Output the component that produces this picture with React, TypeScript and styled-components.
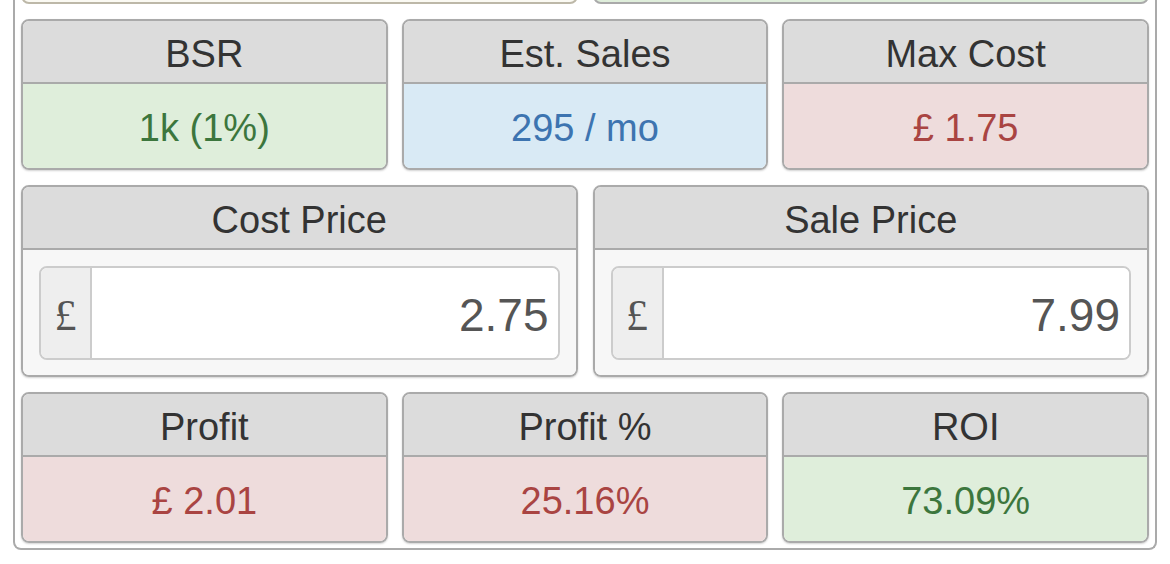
import styled, { createGlobalStyle } from "styled-components";

const GlobalStyle = createGlobalStyle`
  body {
    margin: 0;
    background: #ffffff;
    font-family: "Liberation Sans", Arial, sans-serif;
  }
`;

type Tone = "green" | "blue" | "red" | "plain";

const tones = {
  green: { bg: "#dfeedb", fg: "#3c763d" },
  blue: { bg: "#d9eaf5", fg: "#3d74b0" },
  red: { bg: "#eedcdc", fg: "#a94442" },
  plain: { bg: "#f7f7f7", fg: "#333333" },
};

// the page is scrolled, so everything is pinned to the bottom of the window
const Screen = styled.div`
  height: 564px;
  overflow: hidden;
  display: flex;
  flex-direction: column;
  justify-content: flex-end;
  padding-bottom: 14px;
  box-sizing: border-box;
`;

const Panel = styled.div`
  margin: 0 13px;
  border: 2px solid #aaaaaa;
  border-top: none;
  border-radius: 0 0 8px 8px;
  padding: 0 6px 5px;
  display: flex;
  flex-direction: column;
  gap: 15px;
`;

const Row = styled.div<{ $cols: number }>`
  display: grid;
  grid-template-columns: repeat(${(p) => p.$cols}, 1fr);
  column-gap: ${(p) => (p.$cols === 3 ? 14 : 15)}px;
`;

const Card = styled.div`
  border: 2px solid #aaaaaa;
  border-radius: 8px;
  overflow: hidden;
  box-shadow: 0 1px 2px rgba(0, 0, 0, 0.18);
  display: flex;
  flex-direction: column;
`;

const PrevCard = styled.div<{ $bg: string; $line: string }>`
  height: 80px;
  background: ${(p) => p.$bg};
  border: 2px solid ${(p) => p.$line};
  border-radius: 8px;
`;

const Header = styled.div`
  height: 61px;
  line-height: 66px;
  background: #dcdcdc;
  color: #333333;
  font-size: 38px;
  text-align: center;
  border-bottom: 2px solid #aaaaaa;
`;

const Value = styled.div<{ $tone: Tone }>`
  height: 84px;
  line-height: 89px;
  background: ${(p) => tones[p.$tone].bg};
  color: ${(p) => tones[p.$tone].fg};
  font-size: 38px;
  text-align: center;
`;

const Body = styled.div`
  background: #f7f7f7;
  padding: 16px 16px 15px;
`;

const InputGroup = styled.div`
  height: 90px;
  display: flex;
  border: 2px solid #cccccc;
  border-radius: 8px;
  overflow: hidden;
  background: #ffffff;
`;

const Addon = styled.span`
  width: 49px;
  flex: none;
  display: flex;
  align-items: center;
  justify-content: center;
  padding-top: 4px;
  background: #eeeeee;
  border-right: 2px solid #cccccc;
  color: #555555;
  font-family: "Liberation Serif", "Times New Roman", serif;
  font-size: 44px;
`;

const Field = styled.input`
  flex: 1;
  min-width: 0;
  border: none;
  outline: none;
  background: #ffffff;
  padding: 4px 9px 0 0;
  text-align: right;
  color: #555555;
  font-family: "Liberation Sans", Arial, sans-serif;
  font-size: 46px;
`;

function Stat({ label, value, tone }: { label: string; value: string; tone: Tone }) {
  return (
    <Card>
      <Header>{label}</Header>
      <Value $tone={tone}>{value}</Value>
    </Card>
  );
}

function PriceInput({ label, value }: { label: string; value: string }) {
  return (
    <Card>
      <Header>{label}</Header>
      <Body>
        <InputGroup>
          <Addon>£</Addon>
          <Field defaultValue={value} />
        </InputGroup>
      </Body>
    </Card>
  );
}

export default function App() {
  return (
    <Screen>
      <GlobalStyle />
      <Panel>
        <Row $cols={2}>
          <PrevCard $bg="#fbfaf3" $line="#bdb8a8" />
          <PrevCard $bg="#dfeedb" $line="#aaaaaa" />
        </Row>
        <Row $cols={3}>
          <Stat label="BSR" value="1k (1%)" tone="green" />
          <Stat label="Est. Sales" value="295 / mo" tone="blue" />
          <Stat label="Max Cost" value="£ 1.75" tone="red" />
        </Row>
        <Row $cols={2}>
          <PriceInput label="Cost Price" value="2.75" />
          <PriceInput label="Sale Price" value="7.99" />
        </Row>
        <Row $cols={3}>
          <Stat label="Profit" value="£ 2.01" tone="red" />
          <Stat label="Profit %" value="25.16%" tone="red" />
          <Stat label="ROI" value="73.09%" tone="green" />
        </Row>
      </Panel>
    </Screen>
  );
}
